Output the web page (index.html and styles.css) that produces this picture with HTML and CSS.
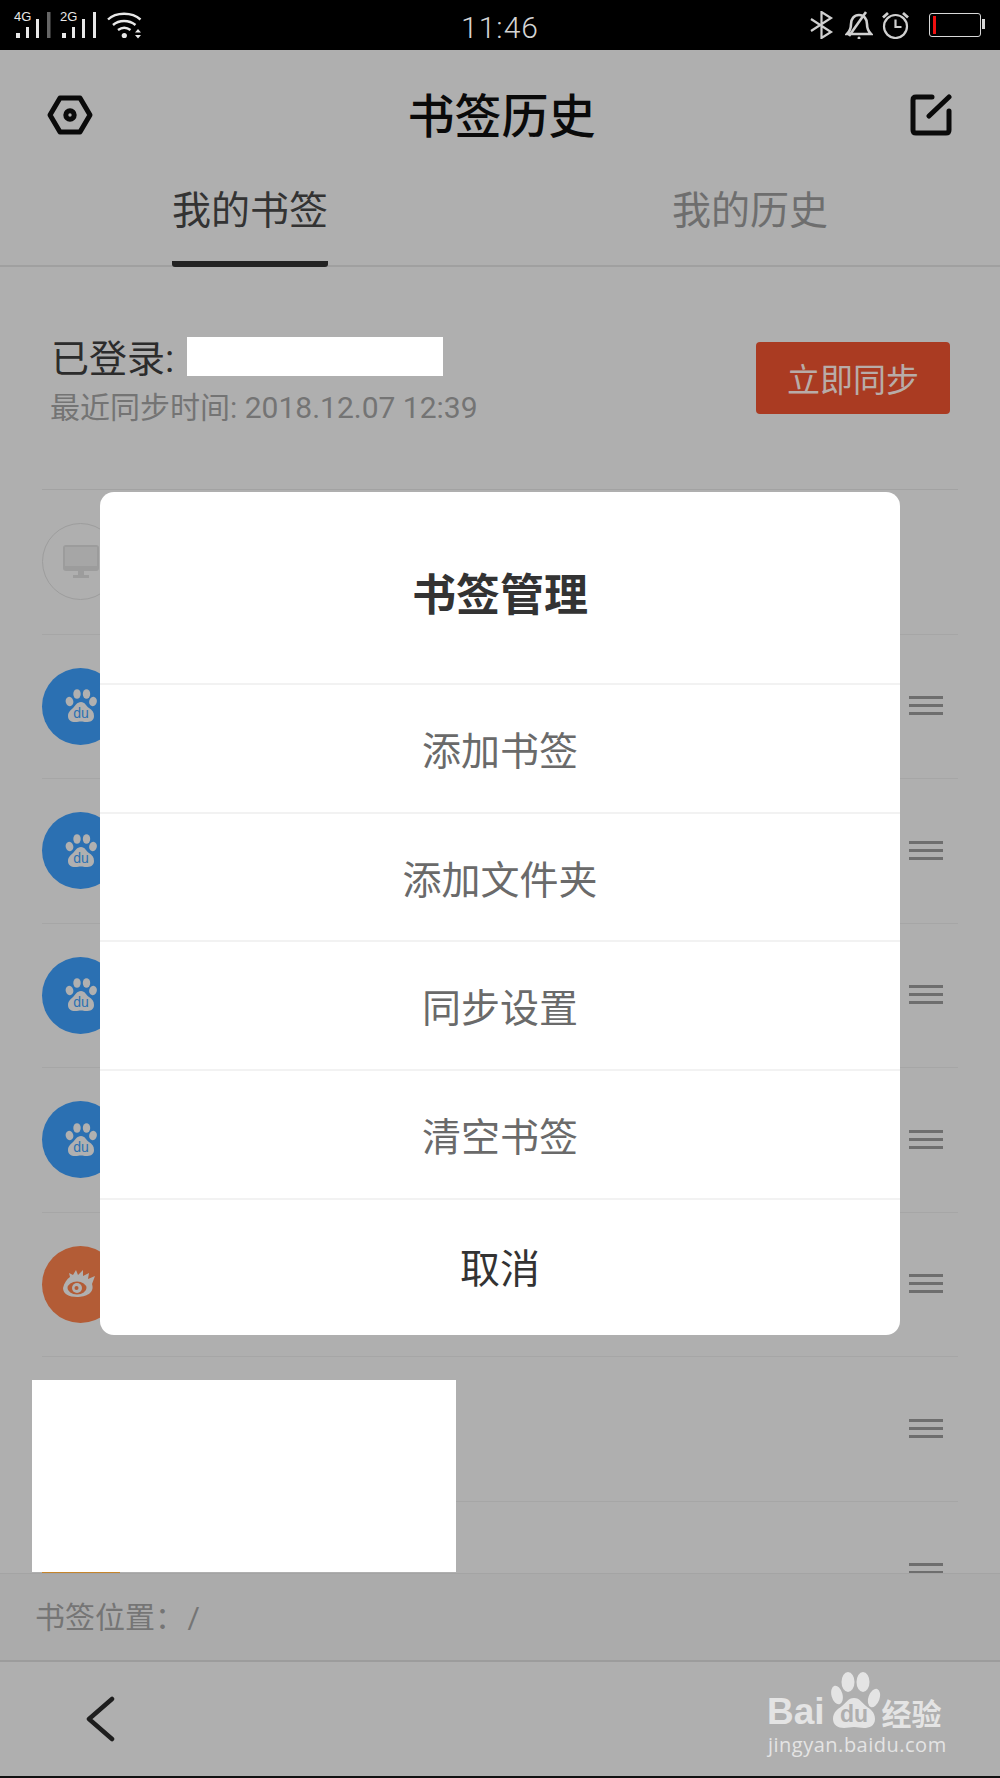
FILE: index.html
```html
<!DOCTYPE html>
<html lang="zh-CN">
<head>
    <meta charset="UTF-8">
    <meta name="viewport" content="width=device-width, initial-scale=1.0">
    <title>书签历史</title>
    <link rel="stylesheet" href="styles.css">
</head>
<body>
    <div class="phone">
        <!-- Status bar -->
        <div class="status-bar">
            <div class="status-left">
                <div class="signal">
                    <span class="signal-label">4G</span>
                    <svg width="36" height="26" viewBox="0 0 36 26"><g fill="#e8e8e8"><rect x="1" y="21" width="4" height="5"/><rect x="11" y="15" width="3" height="11"/><rect x="21" y="7" width="3" height="19"/><rect x="32" y="0" width="3.5" height="26" fill="#666"/></g></svg>
                </div>
                <div class="signal">
                    <span class="signal-label">2G</span>
                    <svg width="36" height="26" viewBox="0 0 36 26"><g fill="#e8e8e8"><rect x="1" y="21" width="4" height="5"/><rect x="11" y="15" width="3" height="11"/><rect x="21" y="7" width="3" height="19"/><rect x="32" y="0" width="3" height="26"/></g></svg>
                </div>
                <svg class="wifi" width="36" height="28" viewBox="0 0 36 28" fill="none" stroke="#e8e8e8" stroke-width="2.4">
                    <path d="M1 8.5C9 .8 25 .8 33.5 8.5"/>
                    <path d="M6 14C12 8.6 22 8.6 28.5 14"/>
                    <path d="M11 19C15 16 19.500 16 23.500 19"/>
                    <circle cx="17.300" cy="24.500" r="2.600" fill="#e8e8e8" stroke="none"/>
                    <path d="M28 21.500h6l-3-3.500zM28 24h6l-3 3.500z" fill="#e8e8e8" stroke="none"/>
                </svg>
            </div>
            <span class="clock">11:46</span>
            <div class="status-right">
                <svg width="24" height="28" viewBox="0 0 24 28" fill="none" stroke="#d0d0d0" stroke-width="2.200"><path d="M1 8l20 13-9.500 6V1l9.500 6L1 20"/></svg>
                <svg width="28" height="28" viewBox="0 0 28 28" fill="none" stroke="#d0d0d0" stroke-width="2.600"><path d="M2 23c3-3 4-5 4-10 0-5 3-9 8-9s8 4 8 9c0 5 1 7 4 10z"/><path d="M4 25L21 1"/><circle cx="14" cy="27" r="1.500" fill="#d0d0d0" stroke="none"/></svg>
                <svg class="alarm" width="27" height="28" viewBox="0 0 27 28" fill="none" stroke="#d0d0d0" stroke-width="2.200"><circle cx="13.500" cy="15.500" r="11.500"/><path d="M13.500 8.500v7.500h6"/><path d="M1 6.500L6 2M26 6.500L21 2" stroke-width="2.800"/></svg>
                <div class="battery"><span class="battery-level"></span></div>
            </div>
        </div>

        <!-- Title bar and tabs -->
        <header class="title-bar">
            <svg class="title-icon" width="46" height="40" viewBox="0 0 46 40" fill="none" stroke="#0a0a0a" stroke-width="5" stroke-linejoin="round"><path d="M13 3h20l10 17-10 17H13L3 20z"/><circle cx="23" cy="20" r="4.200"/></svg>
            <h1>书签历史</h1>
            <svg class="title-icon" width="42" height="42" viewBox="0 0 42 42" fill="none" stroke="#0a0a0a" stroke-width="5" stroke-linecap="round" stroke-linejoin="round"><path d="M22 3H6Q3 3 3 6V36Q3 39 6 39H36Q39 39 39 36V17"/><path d="M19 22L39 3"/></svg>
        </header>
        <nav class="tabs">
            <div class="tab tab-active"><span>我的书签</span></div>
            <div class="tab"><span>我的历史</span></div>
        </nav>

        <!-- Account row -->
        <section class="account">
            <div class="account-info">
                <div class="account-name">已登录:</div>
                <div class="account-sync">最近同步时间: 2018.12.07 12:39</div>
            </div>
            <button class="sync-btn">立即同步</button>
        </section>

        <!-- Bookmark rows, the dialog covers most of them -->
        <ul class="bookmarks">
            <li class="bookmark">
                <span class="site-icon site-pc">
                    <svg width="36" height="34" viewBox="0 0 36 34"><path d="M3 0h30q3 0 3 3v20q0 3-3 3H21v4h5v3H10v-3h5v-4H3q-3 0-3-3V3q0-3 3-3z" fill="#9c9c9c"/><rect x="2" y="2" width="32" height="19" fill="#a6a6a6"/></svg>
                </span>
            </li>
            <li class="bookmark">
                <span class="site-icon site-baidu">
                    <svg width="32" height="34" viewBox="0 0 32 34"><g fill="#b0b0b0"><ellipse cx="4.500" cy="12.500" rx="3.800" ry="4.700" transform="rotate(-15 4.500 12.500)"/><ellipse cx="12" cy="5" rx="3.700" ry="4.800"/><ellipse cx="21.500" cy="5" rx="3.700" ry="4.800"/><ellipse cx="28" cy="12.500" rx="3.800" ry="4.700" transform="rotate(15 28 12.500)"/><path d="M16 13c4 0 5 4 8 6s5 4 5 8c0 5-4 6-8 6-2 0-3-.5-5-.5s-3 .5-6 .5c-4 0-7-2-7-6 0-4 3-6 5-8s4-6 8-6z"/></g><text x="16" y="29" class="paw-du">du</text></svg>
                </span>
                <span class="drag"></span>
            </li>
            <li class="bookmark">
                <span class="site-icon site-baidu">
                    <svg width="32" height="34" viewBox="0 0 32 34"><g fill="#b0b0b0"><ellipse cx="4.500" cy="12.500" rx="3.800" ry="4.700" transform="rotate(-15 4.500 12.500)"/><ellipse cx="12" cy="5" rx="3.700" ry="4.800"/><ellipse cx="21.500" cy="5" rx="3.700" ry="4.800"/><ellipse cx="28" cy="12.500" rx="3.800" ry="4.700" transform="rotate(15 28 12.500)"/><path d="M16 13c4 0 5 4 8 6s5 4 5 8c0 5-4 6-8 6-2 0-3-.5-5-.5s-3 .5-6 .5c-4 0-7-2-7-6 0-4 3-6 5-8s4-6 8-6z"/></g><text x="16" y="29" class="paw-du">du</text></svg>
                </span>
                <span class="drag"></span>
            </li>
            <li class="bookmark">
                <span class="site-icon site-baidu">
                    <svg width="32" height="34" viewBox="0 0 32 34"><g fill="#b0b0b0"><ellipse cx="4.500" cy="12.500" rx="3.800" ry="4.700" transform="rotate(-15 4.500 12.500)"/><ellipse cx="12" cy="5" rx="3.700" ry="4.800"/><ellipse cx="21.500" cy="5" rx="3.700" ry="4.800"/><ellipse cx="28" cy="12.500" rx="3.800" ry="4.700" transform="rotate(15 28 12.500)"/><path d="M16 13c4 0 5 4 8 6s5 4 5 8c0 5-4 6-8 6-2 0-3-.5-5-.5s-3 .5-6 .5c-4 0-7-2-7-6 0-4 3-6 5-8s4-6 8-6z"/></g><text x="16" y="29" class="paw-du">du</text></svg>
                </span>
                <span class="drag"></span>
            </li>
            <li class="bookmark">
                <span class="site-icon site-baidu">
                    <svg width="32" height="34" viewBox="0 0 32 34"><g fill="#b0b0b0"><ellipse cx="4.500" cy="12.500" rx="3.800" ry="4.700" transform="rotate(-15 4.500 12.500)"/><ellipse cx="12" cy="5" rx="3.700" ry="4.800"/><ellipse cx="21.500" cy="5" rx="3.700" ry="4.800"/><ellipse cx="28" cy="12.500" rx="3.800" ry="4.700" transform="rotate(15 28 12.500)"/><path d="M16 13c4 0 5 4 8 6s5 4 5 8c0 5-4 6-8 6-2 0-3-.5-5-.5s-3 .5-6 .5c-4 0-7-2-7-6 0-4 3-6 5-8s4-6 8-6z"/></g><text x="16" y="29" class="paw-du">du</text></svg>
                </span>
                <span class="drag"></span>
            </li>
            <li class="bookmark">
                <span class="site-icon site-weibo">
                    <svg width="38" height="30" viewBox="0 0 38 30"><path d="M1 19C2 14 5 10 8 8L7 4l4 2 3-5 2 5 5-5v6l6-3-1 6 7-3-3 8C33 24 24 28 15 28 7 28 1 25 1 19z" fill="#b0b0b0"/><ellipse cx="15" cy="19" rx="9.500" ry="6.500" fill="#b35c36"/><circle cx="15" cy="19" r="5" fill="#b0b0b0"/><circle cx="14.500" cy="19" r="2" fill="#b35c36"/></svg>
                </span>
                <span class="drag"></span>
            </li>
            <li class="bookmark bookmark-blank"><span class="drag"></span></li>
            <li class="bookmark">
                <span class="site-strip"></span>
                <span class="drag"></span>
            </li>
        </ul>

        <!-- Location bar and bottom nav -->
        <div class="location">书签位置： /</div>
        <footer class="bottom-nav">
            <svg width="32" height="46" viewBox="0 0 32 46" fill="none" stroke="#1e1e1e" stroke-width="4.500" stroke-linecap="round" stroke-linejoin="round"><path d="M28 3L5 23l23 20"/></svg>
        </footer>

        <!-- Redacted blocks -->
        <div class="redact redact-name"></div>
        <div class="redact redact-rows"></div>

        <!-- Dialog -->
        <div class="dialog">
            <div class="dialog-title">书签管理</div>
            <div class="dialog-item">添加书签</div>
            <div class="dialog-item">添加文件夹</div>
            <div class="dialog-item">同步设置</div>
            <div class="dialog-item">清空书签</div>
            <div class="dialog-item dialog-cancel">取消</div>
        </div>

        <!-- Watermark -->
        <div class="watermark">
            <div class="watermark-logo">
                <span class="watermark-bai">Bai</span>
                <svg class="watermark-paw" width="50" height="58" viewBox="0 0 50 58"><g fill="#e4e4e4"><ellipse cx="6" cy="24" rx="5.500" ry="9.500" transform="rotate(-15 6 24)"/><ellipse cx="17" cy="11" rx="6.500" ry="10"/><ellipse cx="32" cy="11" rx="6.500" ry="10"/><ellipse cx="43" cy="27" rx="5.500" ry="9.500" transform="rotate(20 43 27)"/><path d="M23 27c6 0 8 5 12 8s9 6 9 13c0 7-6 9-11 9-4 0-6-1-10-1s-6 1-10 1c-6 0-11-3-11-9 0-7 5-10 9-13s6-8 12-8z"/></g><text x="23" y="51" class="watermark-du">du</text></svg>
                <span class="watermark-cn">经验</span>
            </div>
            <div class="watermark-url">jingyan.baidu.com</div>
        </div>
    </div>
</body>
</html>
```
FILE: styles.css
```css
/* Global styles */
* {
    box-sizing: border-box;
}

body {
    margin: 0;
    font-family: "Noto Sans CJK SC", "Liberation Sans", sans-serif;
    background-color: #afafaf;
}

.phone {
    position: relative;
    display: flex;
    flex-direction: column;
    width: 1000px;
    height: 1778px;
    overflow: hidden;
    background-color: #afafaf;
    border-bottom: 2px solid #111;
}

/* Status bar */
.status-bar {
    position: relative;
    display: flex;
    align-items: center;
    justify-content: space-between;
    flex: none;
    height: 50px;
    padding: 0 15px;
    background-color: #000;
}

.status-left,
.status-right {
    display: flex;
    align-items: center;
}

.status-left {
    gap: 10px;
}

.status-right {
    gap: 11px;
}

.signal {
    position: relative;
    width: 36px;
    height: 26px;
    margin-top: -1px;
}

.signal-label {
    position: absolute;
    top: -2px;
    left: -1px;
    font-family: "Liberation Sans", sans-serif;
    font-size: 13px;
    line-height: 14px;
    color: #e8e8e8;
}

.clock {
    position: absolute;
    left: 0;
    right: 0;
    top: 8px;
    font-family: "Roboto", "Liberation Sans", sans-serif;
    font-size: 30px;
    font-weight: 300;
    line-height: 40px;
    letter-spacing: 1px;
    text-align: center;
    color: #d4d4d4;
}

.alarm {
    margin-left: -2px;
}

.battery {
    position: relative;
    width: 52px;
    height: 24px;
    margin-left: 9px;
    margin-right: 4px;
    padding: 2px 3px;
    border: 1.500px solid #d8d8d8;
    border-radius: 3px;
}

.battery::after {
    content: "";
    position: absolute;
    top: 5px;
    right: -5px;
    width: 3px;
    height: 10px;
    background-color: #d8d8d8;
}

.battery-level {
    display: block;
    width: 3px;
    height: 100%;
    background-color: #f01010;
}

/* Title bar */
.title-bar {
    display: flex;
    align-items: center;
    justify-content: space-between;
    flex: none;
    height: 130px;
    padding: 0 50px 0 47px;
}

.title-bar h1 {
    margin: 0 0 4px;
    font-size: 47px;
    font-weight: 500;
    line-height: 60px;
    color: #0a0a0a;
}

.title-icon {
    flex: none;
}

.title-icon:last-child {
    margin-right: -2px;
}

/* Tabs */
.tabs {
    display: flex;
    flex: none;
    height: 87px;
    border-bottom: 2px solid #a0a0a0;
}

.tab {
    display: flex;
    justify-content: center;
    flex: 1;
    font-size: 39px;
    line-height: 54px;
    color: #6e6e6e;
}

.tab span {
    display: block;
    height: 87px;
}

.tab-active {
    color: #333;
}

.tab-active span {
    border-bottom: 6px solid #232323;
    border-radius: 3px;
}

/* Account row */
.account {
    display: flex;
    align-items: center;
    justify-content: space-between;
    flex: none;
    height: 223px;
    margin: 0 42px;
    padding: 0 8px 0 10px;
    border-bottom: 1px solid #a2a2a2;
}

.account-info {
    padding-top: 5.500px;
    font-family: "Roboto", "Noto Sans CJK SC", sans-serif;
}

.account-name {
    margin-left: -1px;
    font-size: 38px;
    line-height: 50px;
    color: #2c2c2c;
}

.account-sync {
    margin-top: 3.500px;
    margin-left: -2px;
    font-size: 30px;
    line-height: 40px;
    color: #747474;
}

.sync-btn {
    width: 194px;
    height: 72px;
    padding: 0;
    font-family: inherit;
    font-size: 33px;
    color: #b8aca8;
    background-color: #aa3b22;
    border: none;
    border-radius: 4px;
}

/* Bookmark rows */
.bookmarks {
    flex: 1;
    min-height: 0;
    margin: 0;
    padding: 0 42px;
    overflow: hidden;
    list-style: none;
}

.bookmark {
    display: flex;
    align-items: center;
    justify-content: space-between;
    height: 144.500px;
    border-bottom: 1px solid #a6a6a6;
}

.bookmark-blank {
    justify-content: flex-end;
}

.site-icon {
    display: flex;
    align-items: center;
    justify-content: center;
    width: 77px;
    height: 77px;
    border-radius: 50%;
}

.site-pc {
    border: 1px solid #9d9d9d;
}

.site-baidu {
    background-color: #2b70b2;
}

.site-weibo {
    background-color: #b35c36;
}

.paw-du {
    font-family: "Liberation Sans", sans-serif;
    font-size: 14px;
    text-anchor: middle;
    fill: #2b70b2;
}

.site-strip {
    display: block;
    width: 78px;
    height: 4px;
    background-color: #c5852b;
}

.drag {
    display: block;
    width: 34px;
    height: 19px;
    margin-top: -1px;
    margin-right: 15px;
    background: linear-gradient(#6e6e6e 0 3px, transparent 3px 8px, #6e6e6e 8px 11px, transparent 11px 16px, #6e6e6e 16px 19px);
}

/* Location bar */
.location {
    flex: none;
    height: 89px;
    padding-left: 35px;
    font-family: "Roboto", "Noto Sans CJK SC", sans-serif;
    font-size: 30px;
    line-height: 88px;
    word-spacing: -5px;
    color: #757575;
    background-color: #ababab;
    border-top: 1px solid #a4a4a4;
    border-bottom: 2px solid #9c9c9c;
}

/* Bottom nav */
.bottom-nav {
    display: flex;
    align-items: center;
    flex: none;
    height: 114px;
    padding-left: 84px;
}

/* Redacted blocks */
.redact {
    position: absolute;
    background-color: #fff;
}

.redact-name {
    top: 337px;
    left: 187px;
    width: 256px;
    height: 39px;
}

.redact-rows {
    top: 1380px;
    left: 32px;
    width: 424px;
    height: 192px;
}

/* Dialog */
.dialog {
    position: absolute;
    top: 492px;
    left: 100px;
    width: 800px;
    height: 843px;
    overflow: hidden;
    background-color: #fff;
    border-radius: 14px;
}

.dialog-title {
    height: 191px;
    font-size: 44px;
    font-weight: 700;
    line-height: 200px;
    text-align: center;
    color: #333;
}

.dialog-item {
    height: 128.700px;
    font-size: 39px;
    line-height: 126px;
    text-align: center;
    color: #6a6a6a;
    border-top: 2px solid #f2f2f2;
}

.dialog-cancel {
    height: 138px;
    font-size: 40px;
    line-height: 133px;
    color: #333;
}

/* Watermark */
.watermark {
    position: absolute;
    top: 1671px;
    left: 768px;
    width: 180px;
    color: #e4e4e4;
}

.watermark-logo {
    display: flex;
    align-items: flex-end;
    height: 58px;
}

.watermark-bai {
    margin-bottom: -4px;
    margin-left: -1px;
    font-family: "Liberation Sans", sans-serif;
    font-size: 37px;
    font-weight: 700;
    line-height: 42px;
}

.watermark-paw {
    flex: none;
    margin-left: 6px;
}

.watermark-du {
    font-family: "Liberation Sans", sans-serif;
    font-size: 23px;
    font-weight: 700;
    text-anchor: middle;
    fill: #afafaf;
}

.watermark-cn {
    margin-bottom: -2px;
    margin-left: 1px;
    font-size: 30px;
    font-weight: 700;
    line-height: 38px;
}

.watermark-url {
    margin-top: 2px;
    font-family: "Open Sans", "Liberation Sans", sans-serif;
    font-size: 20px;
    line-height: 28px;
    letter-spacing: 0.500px;
    white-space: nowrap;
}
```
